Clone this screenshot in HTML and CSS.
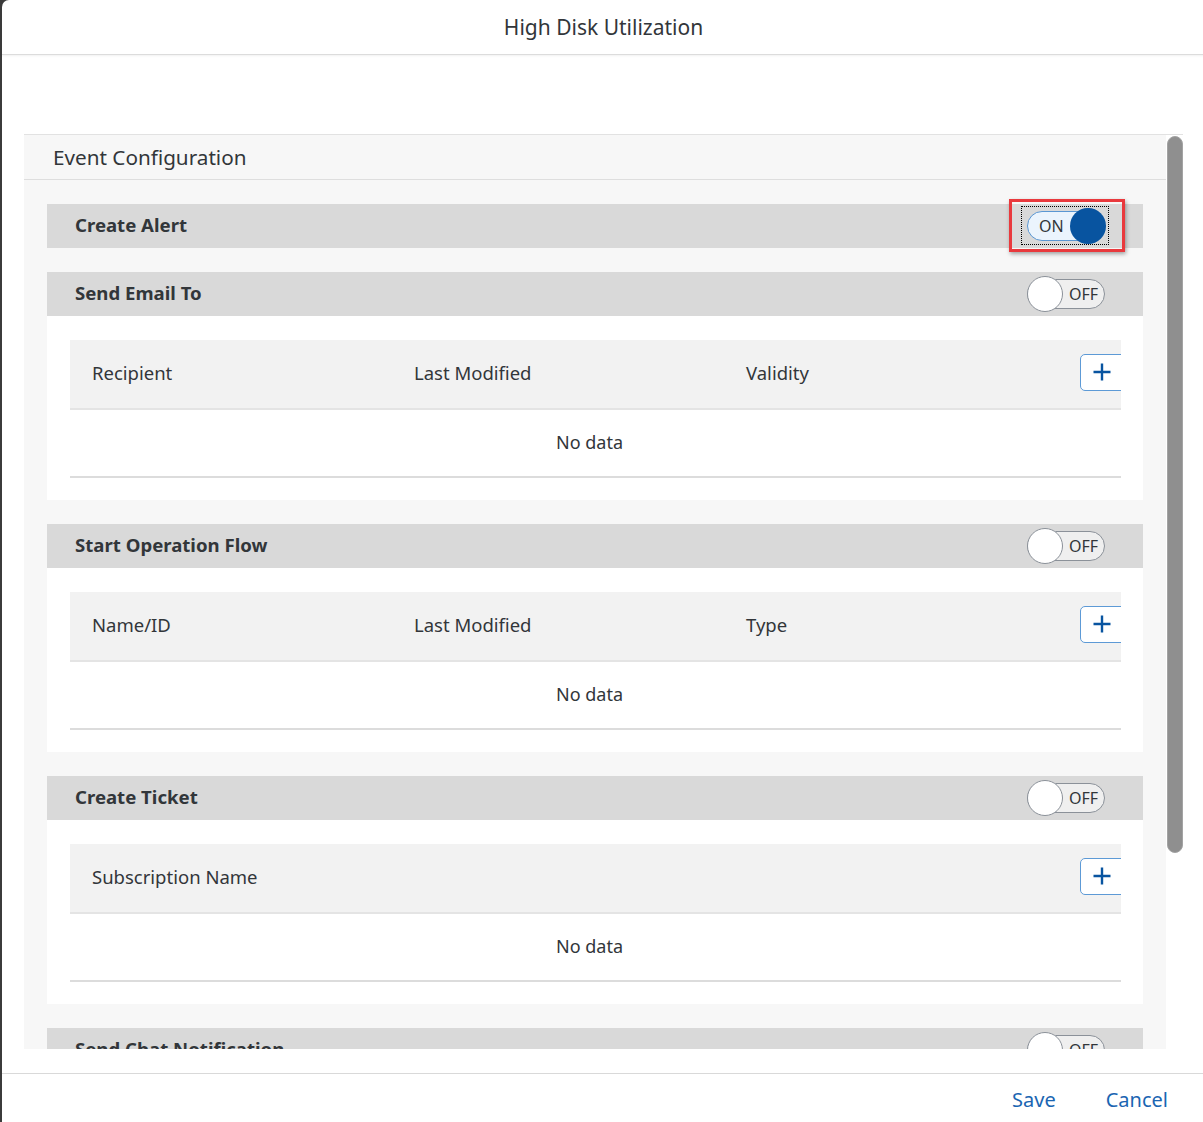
FILE: index.html
```html
<!DOCTYPE html>
<html>
<head>
<meta charset="utf-8">
<link rel="stylesheet" href="styles.css">
</head>
<body>
<div class="dialog">
  <header class="dlg-header">High Disk Utilization</header>
  <div class="dlg-content">
    <div class="scroll">
      <div class="panel">
        <div class="panel-head">Event Configuration</div>
        <div class="panel-body">
          <section class="sec">
            <div class="bar">
              <span class="bar-label">Create Alert</span>
              <span class="focus-wrap">
                <span class="switch on"><span class="track"><span class="txt">ON</span></span><span class="knob"></span></span>
                <span class="highlight"></span>
              </span>
            </div>
          </section>

          <section class="sec">
            <div class="bar">
              <span class="bar-label">Send Email To</span>
              <span class="switch off"><span class="track"><span class="txt">OFF</span></span><span class="knob"></span></span>
            </div>
            <div class="sec-body">
              <div class="table">
                <div class="thead cols3">
                  <span>Recipient</span><span>Last Modified</span><span>Validity</span>
                  <button class="add"><svg viewBox="0 0 20 20" width="20" height="20"><path d="M10 1.5v17M1.5 10h17" stroke="#0854a0" stroke-width="2.4" fill="none"/></svg></button>
                </div>
                <div class="nodata">No data</div>
              </div>
            </div>
          </section>

          <section class="sec">
            <div class="bar">
              <span class="bar-label">Start Operation Flow</span>
              <span class="switch off"><span class="track"><span class="txt">OFF</span></span><span class="knob"></span></span>
            </div>
            <div class="sec-body">
              <div class="table">
                <div class="thead cols3">
                  <span>Name/ID</span><span>Last Modified</span><span>Type</span>
                  <button class="add"><svg viewBox="0 0 20 20" width="20" height="20"><path d="M10 1.5v17M1.5 10h17" stroke="#0854a0" stroke-width="2.4" fill="none"/></svg></button>
                </div>
                <div class="nodata">No data</div>
              </div>
            </div>
          </section>

          <section class="sec">
            <div class="bar">
              <span class="bar-label">Create Ticket</span>
              <span class="switch off"><span class="track"><span class="txt">OFF</span></span><span class="knob"></span></span>
            </div>
            <div class="sec-body">
              <div class="table">
                <div class="thead cols1">
                  <span>Subscription Name</span>
                  <button class="add"><svg viewBox="0 0 20 20" width="20" height="20"><path d="M10 1.5v17M1.5 10h17" stroke="#0854a0" stroke-width="2.4" fill="none"/></svg></button>
                </div>
                <div class="nodata">No data</div>
              </div>
            </div>
          </section>

          <section class="sec">
            <div class="bar">
              <span class="bar-label">Send Chat Notification</span>
              <span class="switch off"><span class="track"><span class="txt">OFF</span></span><span class="knob"></span></span>
            </div>
          </section>
        </div>
      </div>
      <div class="sbar"><div class="thumb"></div></div>
    </div>
  </div>
  <footer class="dlg-footer">
    <button class="link">Save</button>
    <button class="link">Cancel</button>
  </footer>
</div>
</body>
</html>
```

FILE: styles.css
```css
* { box-sizing: border-box; }
html, body { margin: 0; padding: 0; }
body {
  background: #3b3b3b;
  font-family: "Noto Sans", "Open Sans", sans-serif;
  color: #32363a;
  width: 1203px;
  height: 1122px;
  overflow: hidden;
}
.dialog {
  margin-left: 2px;
  width: 1210px;
  height: 1122px;
  background: #fff;
  border-top-left-radius: 7px;
  display: flex;
  flex-direction: column;
}
.dlg-header {
  height: 55px;
  flex: none;
  display: flex;
  align-items: center;
  justify-content: center;
  font-size: 21px;
  padding-right: 7px;
  border-bottom: 1px solid #dcdcdc;
  box-shadow: 0 1px 2px rgba(0,0,0,0.06);
}
.dlg-content {
  flex: 1;
  padding: 79px 0 24px 22px;
  min-height: 0;
  display: flex;
  flex-direction: column;
}
.scroll {
  flex: 1;
  min-height: 0;
  display: flex;
  width: 1159px;
  border-top: 1px solid #e2e2e2;
}
.panel {
  width: 1142px;
  background: #f7f7f7;
  overflow: hidden;
}
.panel-head {
  height: 45px;
  padding-left: 29px;
  display: flex;
  align-items: center;
  font-size: 20.7px;
  border-bottom: 1px solid #dedede;
}
.panel-body {
  padding: 24px 23px 0 23px;
}
.sec { margin-bottom: 24px; }
.bar {
  height: 44px;
  background: #d9d9d9;
  display: flex;
  align-items: center;
  justify-content: space-between;
  padding: 0 36px 0 28px;
}
.bar-label {
  font-size: 18.6px;
  font-weight: 700;
  color: #32363a;
  margin-bottom: 3px;
}
.sec-body {
  background: #fff;
  padding: 24px 22px 22px 23px;
}
.table { overflow: hidden; }
.thead {
  height: 70px;
  background: #f2f2f2;
  border-bottom: 2px solid #e4e4e4;
  display: grid;
  align-items: center;
  font-size: 18.5px;
  padding: 0 0 4px 22px;
}
.cols3 { grid-template-columns: 322px 332px 1fr 41px; }
.cols1 { grid-template-columns: 1fr 41px; }
.add {
  width: 48px;
  height: 37px;
  border: 1px solid #5d9ad6;
  border-radius: 5px;
  background: #fff;
  display: flex;
  align-items: center;
  justify-content: center;
  padding: 0 4px 0 0;
}
.add svg { display: block; }
.nodata {
  height: 68px;
  border-bottom: 2px solid #dcdcdc;
  display: flex;
  align-items: center;
  justify-content: center;
  padding: 0 12px 2px 0;
  font-size: 18px;
}
.sbar {
  width: 17px;
  padding: 1px 0 0 1px;
}
.thumb {
  width: 16px;
  height: 717px;
  background: #8f8f8f;
  border: 1px solid #a3a3a3;
  border-radius: 8px;
}
.dlg-footer {
  height: 49px;
  flex: none;
  border-top: 1px solid #d9d9d9;
  display: flex;
  justify-content: flex-end;
  align-items: flex-start;
  padding: 12px 44px 0 0;
  gap: 50px;
}
.link {
  background: none;
  border: none;
  padding: 0;
  font-family: inherit;
  font-size: 20px;
  color: #1a65b2;
}

/* switch */
.switch {
  position: relative;
  display: inline-block;
  width: 80px;
  height: 36px;
}
.switch .track {
  position: absolute;
  left: 0;
  right: 2px;
  top: 3px;
  height: 30px;
  border-radius: 15px;
  border: 1px solid #8b9199;
  background: #efefef;
  display: flex;
  align-items: center;
  font-size: 16px;
  color: #32363a;
}
.switch .knob {
  position: absolute;
  top: 0;
  width: 36px;
  height: 36px;
  border-radius: 50%;
}
.switch.off .track { justify-content: flex-end; padding-right: 6px; }
.switch.off .knob { left: 0; background: #fff; border: 1px solid #8b9199; }
.switch.on .track {
  left: 1px;
  background: #ebf4fd;
  border-color: #5a97d3;
  padding-left: 11px;
}
.switch.on .knob { right: 0; background: #0854a0; }
.focus-wrap {
  position: relative;
  display: inline-flex;
  margin: 0 -2px 2px 0;
  padding: 1px 2px 0 4px;
  border: 1px dotted #000;
}
.highlight {
  position: absolute;
  left: -13px;
  top: -8px;
  width: 116px;
  height: 53px;
  border: 3px solid #e9393d;
  box-shadow: 1px 2px 4px rgba(0,0,0,0.35);
}
```
